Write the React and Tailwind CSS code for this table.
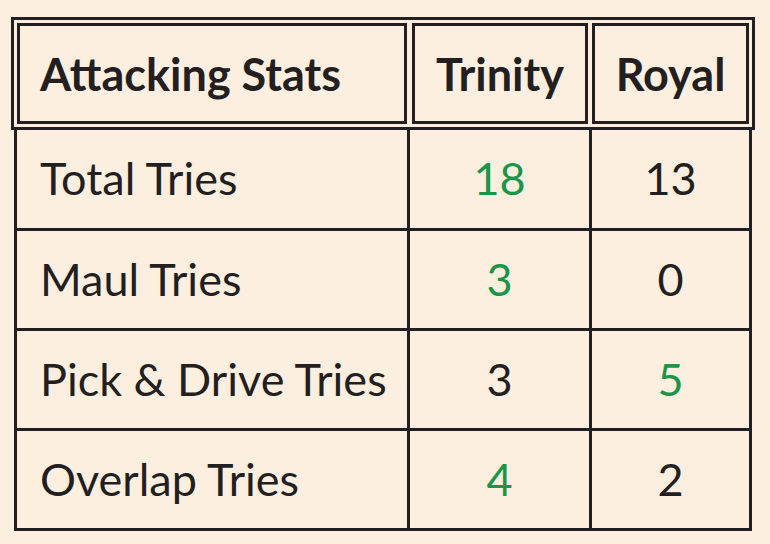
const rows = [
	{ label: 'Total Tries', trinity: '18', royal: '13', win: 'trinity' },
	{ label: 'Maul Tries', trinity: '3', royal: '0', win: 'trinity' },
	{ label: 'Pick & Drive Tries', trinity: '3', royal: '5', win: 'royal' },
	{ label: 'Overlap Tries', trinity: '4', royal: '2', win: 'trinity' },
]

const App = () => {
	return (
		<div className="w-[770px] h-[544px] bg-[#fcefe0] text-[#231f20] pt-[17px] font-['Lato',sans-serif] overflow-hidden">

			<div className="ml-[11px] w-[744px] border-[3px] border-[#231f20] p-[3px]">
				<div className="flex h-[101px] text-[45px] font-bold">
					<div className="w-[390px] border-[3px] border-[#231f20] flex items-center pl-[20px] pt-[2px]">Attacking Stats</div>
					<div className="ml-[5px] w-[176px] border-[3px] border-[#231f20] flex items-center justify-center pt-[2px]">Trinity</div>
					<div className="ml-[4px] w-[157px] border-[3px] border-[#231f20] flex items-center justify-center pt-[2px]">Royal</div>
				</div>
			</div>

			<div className="ml-[14px] w-[738px] border-r-[3px] border-[#231f20] text-[45px]">
				{rows.map((row, i) => (
					<div key={row.label} className={`flex border-b-[3px] border-[#231f20] ${i === 0 ? 'h-[101px]' : 'h-[100px]'}`}>
						<div className="w-[393px] border-l-[3px] border-[#231f20] flex items-center pl-[23px]">{row.label}</div>
						<div className={`w-[182px] border-l-[3px] border-[#231f20] flex items-center justify-center ${row.win === 'trinity' ? 'text-[#1b9547]' : ''}`}>{row.trinity}</div>
						<div className={`w-[160px] border-l-[3px] border-[#231f20] flex items-center justify-center ${row.win === 'royal' ? 'text-[#1b9547]' : ''}`}>{row.royal}</div>
					</div>
				))}
			</div>

		</div>
	)
}

export default App
